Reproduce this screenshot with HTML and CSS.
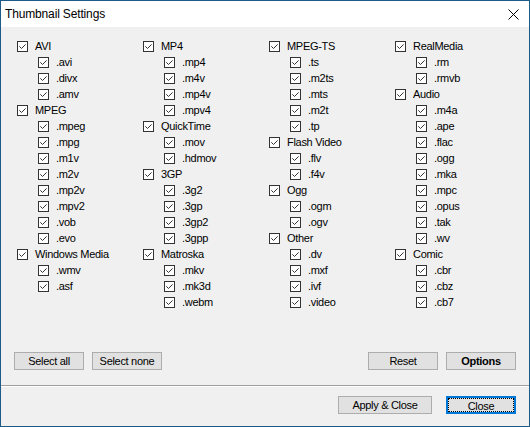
FILE: index.html
```html
<!DOCTYPE html>
<html>
<head>
<meta charset="utf-8">
<link rel="stylesheet" href="styles.css">
</head>
<body>
<svg class="defs" width="0" height="0">
  <symbol id="chk" viewBox="0 0 11 11">
    <rect x="0.5" y="0.5" width="10" height="10" fill="#fff" stroke="#333"/>
    <polyline points="2.3,5.3 4.5,7.5 8.6,3.4" fill="none" stroke="#333" stroke-width="1"/>
  </symbol>
</svg>
<div class="window">
  <div class="titlebar">
    <span class="title">Thumbnail Settings</span>
    <svg class="xbtn" width="11" height="11" viewBox="0 0 11 11"><path d="M0.5 0.5 L10.5 10.5 M10.5 0.5 L0.5 10.5" stroke="#000" stroke-width="1" fill="none"/></svg>
  </div>
  <div class="content">
    <div class="grid">
      <div class="col">
        <div class="row"><svg class="cb"><use href="#chk"/></svg><span>AVI</span></div>
        <div class="row sub"><svg class="cb"><use href="#chk"/></svg><span>.avi</span></div>
        <div class="row sub"><svg class="cb"><use href="#chk"/></svg><span>.divx</span></div>
        <div class="row sub"><svg class="cb"><use href="#chk"/></svg><span>.amv</span></div>
        <div class="row"><svg class="cb"><use href="#chk"/></svg><span>MPEG</span></div>
        <div class="row sub"><svg class="cb"><use href="#chk"/></svg><span>.mpeg</span></div>
        <div class="row sub"><svg class="cb"><use href="#chk"/></svg><span>.mpg</span></div>
        <div class="row sub"><svg class="cb"><use href="#chk"/></svg><span>.m1v</span></div>
        <div class="row sub"><svg class="cb"><use href="#chk"/></svg><span>.m2v</span></div>
        <div class="row sub"><svg class="cb"><use href="#chk"/></svg><span>.mp2v</span></div>
        <div class="row sub"><svg class="cb"><use href="#chk"/></svg><span>.mpv2</span></div>
        <div class="row sub"><svg class="cb"><use href="#chk"/></svg><span>.vob</span></div>
        <div class="row sub"><svg class="cb"><use href="#chk"/></svg><span>.evo</span></div>
        <div class="row"><svg class="cb"><use href="#chk"/></svg><span>Windows Media</span></div>
        <div class="row sub"><svg class="cb"><use href="#chk"/></svg><span>.wmv</span></div>
        <div class="row sub"><svg class="cb"><use href="#chk"/></svg><span>.asf</span></div>
      </div>
      <div class="col">
        <div class="row"><svg class="cb"><use href="#chk"/></svg><span>MP4</span></div>
        <div class="row sub"><svg class="cb"><use href="#chk"/></svg><span>.mp4</span></div>
        <div class="row sub"><svg class="cb"><use href="#chk"/></svg><span>.m4v</span></div>
        <div class="row sub"><svg class="cb"><use href="#chk"/></svg><span>.mp4v</span></div>
        <div class="row sub"><svg class="cb"><use href="#chk"/></svg><span>.mpv4</span></div>
        <div class="row"><svg class="cb"><use href="#chk"/></svg><span>QuickTime</span></div>
        <div class="row sub"><svg class="cb"><use href="#chk"/></svg><span>.mov</span></div>
        <div class="row sub"><svg class="cb"><use href="#chk"/></svg><span>.hdmov</span></div>
        <div class="row"><svg class="cb"><use href="#chk"/></svg><span>3GP</span></div>
        <div class="row sub"><svg class="cb"><use href="#chk"/></svg><span>.3g2</span></div>
        <div class="row sub"><svg class="cb"><use href="#chk"/></svg><span>.3gp</span></div>
        <div class="row sub"><svg class="cb"><use href="#chk"/></svg><span>.3gp2</span></div>
        <div class="row sub"><svg class="cb"><use href="#chk"/></svg><span>.3gpp</span></div>
        <div class="row"><svg class="cb"><use href="#chk"/></svg><span>Matroska</span></div>
        <div class="row sub"><svg class="cb"><use href="#chk"/></svg><span>.mkv</span></div>
        <div class="row sub"><svg class="cb"><use href="#chk"/></svg><span>.mk3d</span></div>
        <div class="row sub"><svg class="cb"><use href="#chk"/></svg><span>.webm</span></div>
      </div>
      <div class="col">
        <div class="row"><svg class="cb"><use href="#chk"/></svg><span>MPEG-TS</span></div>
        <div class="row sub"><svg class="cb"><use href="#chk"/></svg><span>.ts</span></div>
        <div class="row sub"><svg class="cb"><use href="#chk"/></svg><span>.m2ts</span></div>
        <div class="row sub"><svg class="cb"><use href="#chk"/></svg><span>.mts</span></div>
        <div class="row sub"><svg class="cb"><use href="#chk"/></svg><span>.m2t</span></div>
        <div class="row sub"><svg class="cb"><use href="#chk"/></svg><span>.tp</span></div>
        <div class="row"><svg class="cb"><use href="#chk"/></svg><span>Flash Video</span></div>
        <div class="row sub"><svg class="cb"><use href="#chk"/></svg><span>.flv</span></div>
        <div class="row sub"><svg class="cb"><use href="#chk"/></svg><span>.f4v</span></div>
        <div class="row"><svg class="cb"><use href="#chk"/></svg><span>Ogg</span></div>
        <div class="row sub"><svg class="cb"><use href="#chk"/></svg><span>.ogm</span></div>
        <div class="row sub"><svg class="cb"><use href="#chk"/></svg><span>.ogv</span></div>
        <div class="row"><svg class="cb"><use href="#chk"/></svg><span>Other</span></div>
        <div class="row sub"><svg class="cb"><use href="#chk"/></svg><span>.dv</span></div>
        <div class="row sub"><svg class="cb"><use href="#chk"/></svg><span>.mxf</span></div>
        <div class="row sub"><svg class="cb"><use href="#chk"/></svg><span>.ivf</span></div>
        <div class="row sub"><svg class="cb"><use href="#chk"/></svg><span>.video</span></div>
      </div>
      <div class="col">
        <div class="row"><svg class="cb"><use href="#chk"/></svg><span>RealMedia</span></div>
        <div class="row sub"><svg class="cb"><use href="#chk"/></svg><span>.rm</span></div>
        <div class="row sub"><svg class="cb"><use href="#chk"/></svg><span>.rmvb</span></div>
        <div class="row"><svg class="cb"><use href="#chk"/></svg><span>Audio</span></div>
        <div class="row sub"><svg class="cb"><use href="#chk"/></svg><span>.m4a</span></div>
        <div class="row sub"><svg class="cb"><use href="#chk"/></svg><span>.ape</span></div>
        <div class="row sub"><svg class="cb"><use href="#chk"/></svg><span>.flac</span></div>
        <div class="row sub"><svg class="cb"><use href="#chk"/></svg><span>.ogg</span></div>
        <div class="row sub"><svg class="cb"><use href="#chk"/></svg><span>.mka</span></div>
        <div class="row sub"><svg class="cb"><use href="#chk"/></svg><span>.mpc</span></div>
        <div class="row sub"><svg class="cb"><use href="#chk"/></svg><span>.opus</span></div>
        <div class="row sub"><svg class="cb"><use href="#chk"/></svg><span>.tak</span></div>
        <div class="row sub"><svg class="cb"><use href="#chk"/></svg><span>.wv</span></div>
        <div class="row"><svg class="cb"><use href="#chk"/></svg><span>Comic</span></div>
        <div class="row sub"><svg class="cb"><use href="#chk"/></svg><span>.cbr</span></div>
        <div class="row sub"><svg class="cb"><use href="#chk"/></svg><span>.cbz</span></div>
        <div class="row sub"><svg class="cb"><use href="#chk"/></svg><span>.cb7</span></div>
      </div>
    </div>
    <div class="actions">
      <div class="group">
        <button class="btn">Select all</button>
        <button class="btn">Select none</button>
      </div>
      <div class="group">
        <button class="btn">Reset</button>
        <button class="btn bold">Options</button>
      </div>
    </div>
    <div class="footer">
      <button class="btn wide">Apply &amp; Close</button>
      <button class="btn default">Close</button>
    </div>
  </div>
</div>
</body>
</html>
```

FILE: styles.css
```css
html, body {
  margin: 0;
  padding: 0;
  background: #f0f0f0;
}
.defs {
  display: block;
  width: 0;
  height: 0;
  overflow: hidden;
}
.window {
  box-sizing: border-box;
  width: 530px;
  height: 427px;
  border: 1px solid #1c5b87;
  display: flex;
  flex-direction: column;
  font-family: "Liberation Sans", Arial, sans-serif;
  font-size: 11px;
  letter-spacing: -0.3px;
  color: #000;
}
.titlebar {
  height: 25px;
  flex: none;
  background: #fff;
  display: flex;
  align-items: center;
  justify-content: space-between;
  padding: 0 10px 1px 4px;
}
.title {
  font-size: 12px;
  letter-spacing: -0.15px;
}
.xbtn {
  display: block;
  margin-top: 1px;
}
.content {
  flex: 1;
  background: #f0f0f0;
  display: flex;
  flex-direction: column;
}
.grid {
  display: grid;
  grid-template-columns: 126px 126px 126px 126px;
  padding: 11px 0 0 16px;
  height: 299px;
  box-sizing: border-box;
}
.row {
  height: 16px;
  display: flex;
  align-items: center;
  line-height: 16px;
  white-space: nowrap;
}
.row.sub {
  padding-left: 21px;
}
.cb {
  width: 11px;
  height: 11px;
  flex: none;
  margin-right: 7px;
}
.actions {
  display: flex;
  justify-content: space-between;
  padding: 26px 13px 0 13px;
  height: 60px;
  box-sizing: border-box;
  border-bottom: 1px solid #a0a0a0;
  box-shadow: 0 1px 0 #fff;
}
.group {
  display: flex;
  gap: 8px;
  align-items: flex-start;
}
.btn {
  box-sizing: border-box;
  width: 70px;
  height: 18px;
  padding: 0;
  margin: 0;
  background: #e1e1e1;
  border: 1px solid #adadad;
  border-radius: 0;
  font-family: "Liberation Sans", Arial, sans-serif;
  font-size: 11px;
  letter-spacing: -0.3px;
  color: #000;
  line-height: 16px;
}
.btn.bold {
  font-weight: bold;
}
.btn.wide {
  width: 94px;
}
.btn.default {
  border: 2px solid #0078d7;
  outline: 1px dotted #000;
  outline-offset: -3px;
}
.footer {
  display: flex;
  justify-content: flex-end;
  align-items: flex-start;
  gap: 14px;
  padding: 10px 13px 0 0;
}
```
